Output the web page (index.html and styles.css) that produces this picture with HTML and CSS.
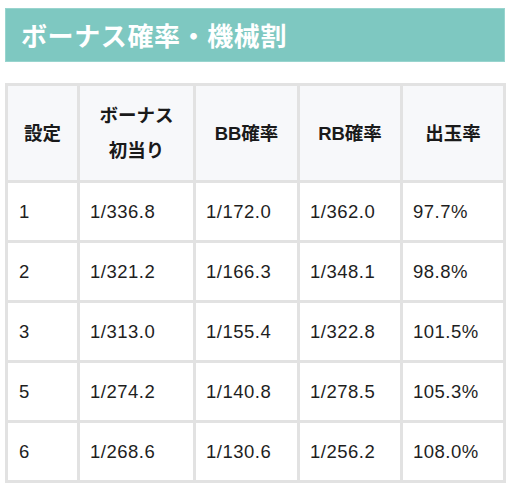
FILE: index.html
```html
<!DOCTYPE html>
<html lang="ja">
<head>
	<meta charset="UTF-8">
	<title>ボーナス確率・機械割</title>
	<link rel="stylesheet" href="styles.css">
</head>
<body>
	<div class="wrap">
		<h2 class="heading">ボーナス確率・機械割</h2>

		<table class="spec">
			<colgroup>
				<col class="c-set">
				<col class="c-first">
				<col class="c-bb">
				<col class="c-rb">
				<col class="c-out">
			</colgroup>
			<thead>
				<tr>
					<th>設定</th>
					<th>ボーナス<br>初当り</th>
					<th>BB確率</th>
					<th>RB確率</th>
					<th>出玉率</th>
				</tr>
			</thead>
			<tbody>
				<tr><td>1</td><td>1/336.8</td><td>1/172.0</td><td>1/362.0</td><td>97.7%</td></tr>
				<tr><td>2</td><td>1/321.2</td><td>1/166.3</td><td>1/348.1</td><td>98.8%</td></tr>
				<tr><td>3</td><td>1/313.0</td><td>1/155.4</td><td>1/322.8</td><td>101.5%</td></tr>
				<tr><td>5</td><td>1/274.2</td><td>1/140.8</td><td>1/278.5</td><td>105.3%</td></tr>
				<tr><td>6</td><td>1/268.6</td><td>1/130.6</td><td>1/256.2</td><td>108.0%</td></tr>
			</tbody>
		</table>
	</div>
</body>
</html>
```

FILE: styles.css
```css
	/**
	 * Page
	 */
	body {
		margin: 0;
		background: white;
		color: #222;
		font-family: "Liberation Sans", "Noto Sans CJK JP", sans-serif;
	}
	.wrap {
		width: 500px;
		padding: 8px 0 0 5px;
	}

	/**
	 * Section heading bar
	 */
	.heading {
		box-sizing: border-box;
		height: 54px;
		margin: 0 0 21px;
		padding: 0 15px;
		background: #7ec8c1;
		border: 1px solid #98d4ce;
		color: white;
		font: bold 26px/52px "Noto Sans CJK JP", sans-serif;
		letter-spacing: .6px;
	}

	/**
	 * Spec table
	 */
	.spec {
		width: 501px;
		border-collapse: collapse;
		table-layout: fixed;
		border: 3px solid #e2e2e2;
	}
	.spec .c-set   { width: 72px; }
	.spec .c-first { width: 116px; }
	.spec .c-bb    { width: 104px; }
	.spec .c-rb    { width: 103px; }
	.spec .c-out   { width: 103px; }

	.spec th, .spec td {
		border: 3px solid #e2e2e2;
		font-size: 18.5px;
		line-height: 35px;
	}
	.spec th {
		padding: 12px 4px;
		background: #f7f8fa;
		font-weight: bold;
		text-align: center;
		color: #1a1a1a;
	}
	.spec td {
		padding: 11px 10px;
		text-align: left;
		letter-spacing: .5px;
		color: #1e1e1e;
	}
	.spec td:first-child {
		padding-left: 11px;
	}
```
